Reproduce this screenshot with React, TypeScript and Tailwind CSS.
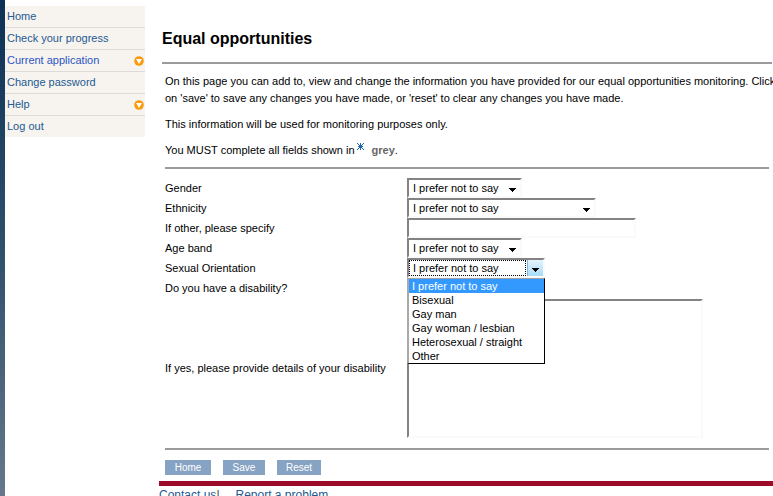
import React, { useState } from "react";

const menu = [
  { name: "Home" },
  { name: "Check your progress" },
  { name: "Current application", sub: true, active: true },
  { name: "Change password" },
  { name: "Help", sub: true },
  { name: "Log out" },
];

const orientations = [
  "I prefer not to say",
  "Bisexual",
  "Gay man",
  "Gay woman / lesbian",
  "Heterosexual / straight",
  "Other",
];

const inset =
  "border-2 border-t-[#848284] border-l-[#848284] border-r-[#fafafa] border-b-[#fafafa] bg-white rounded-none outline-none";

function Arrow() {
  return (
    <svg width="7" height="4" viewBox="0 0 7 4" shapeRendering="crispEdges">
      <path d="M0 0h7v1h-1v1h-1v1h-1v1h-1v-1h-1v-1h-1v-1h-1z" fill="#000" />
    </svg>
  );
}

function SubMenuIcon() {
  return (
    <svg width="10" height="10" viewBox="0 0 10 10">
      <circle cx="5" cy="5" r="4.8" fill="#f99b0c" />
      <path d="M2 3h6L5 8z" fill="#fff" />
    </svg>
  );
}

function Star() {
  return (
    <svg className="ml-[2px] mt-[1px]" width="7" height="7" viewBox="0 0 7 7" shapeRendering="crispEdges" fill="#1c66a8">
      <path d="M3 0h1v7h-1zM0 0h1v1h-1zM1 1h1v1h-1zM2 2h1v1h-1zM6 0h1v1h-1zM5 1h1v1h-1zM4 2h1v1h-1zM1 3h5v1h-5zM2 4h1v1h-1zM1 5h1v1h-1zM0 6h1v1h-1zM4 4h1v1h-1zM5 5h1v1h-1zM6 6h1v1h-1z" />
    </svg>
  );
}

function Select({ id, className, options }: { id: string; className: string; options: string[] }) {
  return (
    <div className={`relative ${className}`}>
      <select id={id} name={id} className={`block w-full h-5 appearance-none pl-1 ${inset}`}>
        {options.map((o) => (
          <option key={o}>{o}</option>
        ))}
      </select>
      <span className="absolute right-[6px] top-[10px] pointer-events-none">
        <Arrow />
      </span>
    </div>
  );
}

function Row({ id, label, children }: { id: string; label: string; children: React.ReactNode }) {
  return (
    <div className="flex items-center">
      <label htmlFor={id} className="w-[242px] shrink-0 leading-5">
        {label}
      </label>
      {children}
    </div>
  );
}

function OrientationSelect() {
  const [value, setValue] = useState(orientations[0]);
  const [open, setOpen] = useState(true);

  const pick = (o: string) => {
    setValue(o);
    setOpen(false);
  };

  return (
    <div className="relative w-[138px]">
      <select
        id="orientation"
        name="orientation"
        value={value}
        onChange={(e) => pick(e.target.value)}
        className={`block w-full h-5 appearance-none pl-1 ${inset}`}
      >
        {orientations.map((o) => (
          <option key={o}>{o}</option>
        ))}
      </select>
      <span className="absolute left-[2px] top-[2px] w-[117px] h-4 border border-dotted border-black pointer-events-none" />
      <button
        type="button"
        aria-label="Show options"
        onClick={() => setOpen(!open)}
        className="absolute right-[2px] top-[2px] w-4 h-4 flex items-center justify-center pt-1 border-l border-[#7fb4d8] bg-linear-to-b from-[#e6f4fc] to-[#a6dbf7]"
      >
        <Arrow />
      </button>
      {open && (
        <ul
          role="listbox"
          aria-label="Sexual Orientation"
          className="absolute z-10 left-0 right-0 top-5 bg-white border border-black border-t-[#a0a0a0] border-l-2 border-l-[#a9a9a9]"
        >
          {orientations.map((o) => (
            <li
              key={o}
              role="option"
              aria-selected={o === value}
              onClick={() => pick(o)}
              className={`h-[14px] leading-[14px] pl-[3px] ${o === value ? "bg-[#3399ff] text-white" : ""}`}
            >
              {o}
            </li>
          ))}
        </ul>
      )}
    </div>
  );
}

function App() {
  const btn = "h-[15px] bg-[#86a3c3] text-white text-[10px] leading-[15px]";

  return (
    <div className="flex h-screen overflow-hidden bg-white text-black text-[11px] font-['Liberation_Sans',Arial,sans-serif]">
      <div className="w-[5px] shrink-0 bg-linear-to-b from-[#0b3156] via-[#2f4f6c] to-[#66788a]" />

      <nav className="w-[140px] shrink-0 pt-[6px]">
        <ul>
          {menu.map((m) => (
            <li key={m.name} className="bg-[#f7f3ef] border-b border-[#e0d9da] last:border-b-0">
              <a
                href="#"
                className={`flex items-center justify-between h-[21px] pl-[2px] pr-[1px] ${m.active ? "text-[#2a55c4]" : "text-[#235a92]"}`}
              >
                {m.name}
                {m.sub && <SubMenuIcon />}
              </a>
            </li>
          ))}
        </ul>
      </nav>

      <main className="flex-1 min-w-0 ml-[14px]">
        <h1 className="pt-[29px] ml-[3px] text-[16px] leading-5 font-bold">Equal opportunities</h1>
        <hr className="mt-[13px] ml-[3px] mr-[1px] border-t-2 border-[#9c9a9c]" />

        <form className="ml-[6px] mr-1" onSubmit={(e) => e.preventDefault()}>
          <div className="pt-[9px] leading-[17px] flex flex-col gap-[9px] -mr-2">
            <p>
              On this page you can add to, view and change the information you have provided for our equal
              opportunities monitoring. Click on 'save' to save any changes you have made, or 'reset' to clear any
              changes you have made.
            </p>
            <p>This information will be used for monitoring purposes only.</p>
            <p className="flex">
              You MUST complete all fields shown in
              <Star />
              <b className="ml-2 text-[#666]">grey</b>.
            </p>
          </div>
          <hr className="mt-2 border-t-2 border-[#9c9a9c]" />

          <div className="mt-[9px]">
            <Row id="gender" label="Gender">
              <Select id="gender" className="w-[115px]" options={["I prefer not to say", "Female", "Male"]} />
            </Row>
            <Row id="ethnicity" label="Ethnicity">
              <Select id="ethnicity" className="w-[189px]" options={["I prefer not to say", "Other"]} />
            </Row>
            <Row id="other" label="If other, please specify">
              <input id="other" name="other" type="text" className={`w-[229px] h-5 px-1 ${inset}`} />
            </Row>
            <Row id="age" label="Age band">
              <Select id="age" className="w-[115px]" options={["I prefer not to say"]} />
            </Row>
            <Row id="orientation" label="Sexual Orientation">
              <OrientationSelect />
            </Row>
            <Row id="disability" label="Do you have a disability?">
              <Select id="disability" className="w-[115px]" options={["", "Yes", "No"]} />
            </Row>
            <Row id="details" label="If yes, please provide details of your disability">
              <textarea
                id="details"
                name="details"
                className={`block w-[296px] h-[139px] mt-[1px] resize-none p-1 ${inset}`}
              />
            </Row>
          </div>

          <hr className="mt-[10px] border-t-2 border-[#9c9a9c]" />
          <div className="flex gap-3 mt-[10px]">
            <button type="button" className={`w-[46px] ${btn}`}>Home</button>
            <button type="submit" className={`w-[42px] ${btn}`}>Save</button>
            <button type="reset" className={`w-[44px] ${btn}`}>Reset</button>
          </div>
        </form>

        <footer className="mt-[6px] border-t-[5px] border-[#9c0b27] pt-[1px] text-[12px] leading-4 text-[#235a92]">
          <a href="#">Contact us</a>
          <span className="mr-4 text-[#444]">|</span>
          <a href="#">Report a problem</a>
        </footer>
      </main>
    </div>
  );
}

export default App;
